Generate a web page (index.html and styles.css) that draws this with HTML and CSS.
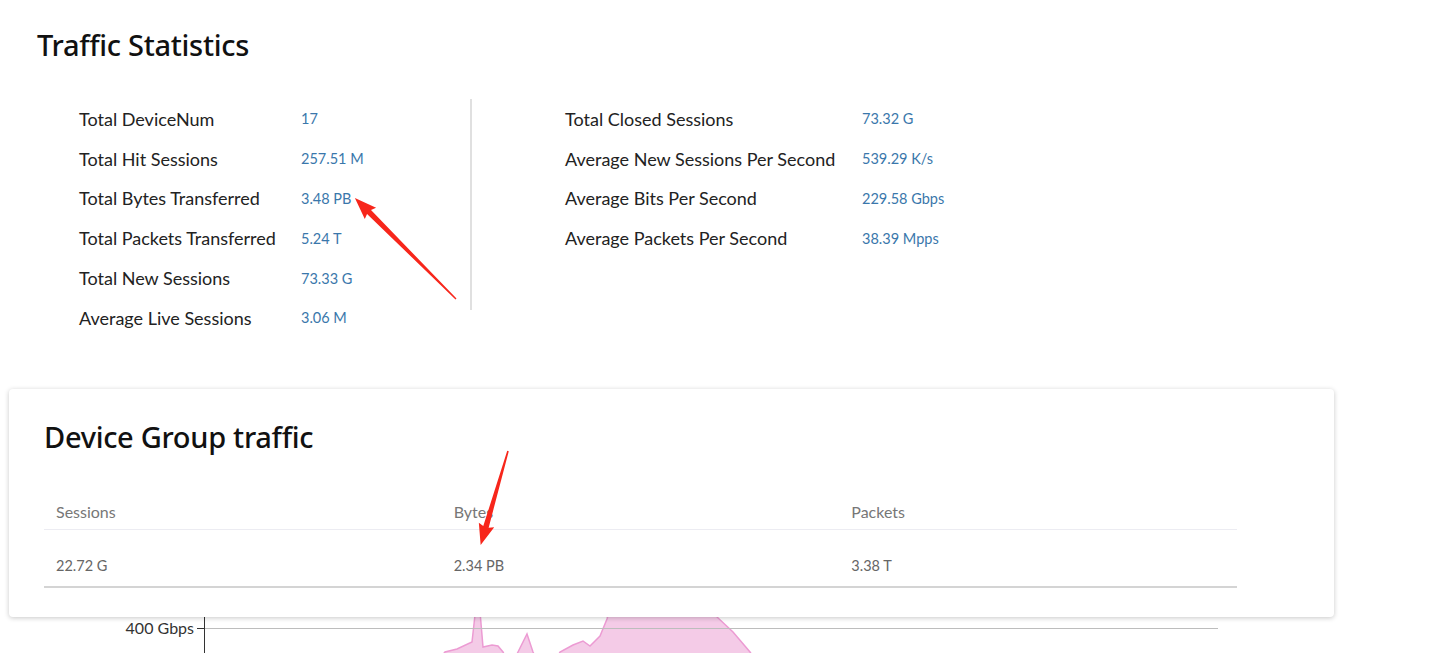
FILE: index.html
```html
<!DOCTYPE html>
<html>
<head>
    <meta charset="UTF-8">
    <title>Traffic Statistics</title>
    <link rel="stylesheet" href="styles.css">
</head>
<body>
    <div class="page">
        <h1 class="page-title">Traffic Statistics</h1>

        <!-- totals -->
        <div class="stats">
            <div class="stats-col stats-left">
                <div class="stat-row"><span class="stat-label">Total DeviceNum</span><span class="stat-value">17</span></div>
                <div class="stat-row"><span class="stat-label">Total Hit Sessions</span><span class="stat-value">257.51 M</span></div>
                <div class="stat-row"><span class="stat-label">Total Bytes Transferred</span><span class="stat-value">3.48 PB</span></div>
                <div class="stat-row"><span class="stat-label">Total Packets Transferred</span><span class="stat-value">5.24 T</span></div>
                <div class="stat-row"><span class="stat-label">Total New Sessions</span><span class="stat-value">73.33 G</span></div>
                <div class="stat-row"><span class="stat-label">Average Live Sessions</span><span class="stat-value">3.06 M</span></div>
            </div>
            <div class="stats-divider"></div>
            <div class="stats-col stats-right">
                <div class="stat-row"><span class="stat-label">Total Closed Sessions</span><span class="stat-value">73.32 G</span></div>
                <div class="stat-row"><span class="stat-label">Average New Sessions Per Second</span><span class="stat-value">539.29 K/s</span></div>
                <div class="stat-row"><span class="stat-label">Average Bits Per Second</span><span class="stat-value">229.58 Gbps</span></div>
                <div class="stat-row"><span class="stat-label">Average Packets Per Second</span><span class="stat-value">38.39 Mpps</span></div>
            </div>
        </div>

        <!-- device group card -->
        <section class="card">
            <h2 class="card-title">Device Group traffic</h2>
            <table class="group-table">
                <thead>
                    <tr><th>Sessions</th><th>Bytes</th><th>Packets</th></tr>
                </thead>
                <tbody>
                    <tr><td>22.72 G</td><td>2.34 PB</td><td>3.38 T</td></tr>
                </tbody>
            </table>
        </section>

        <!-- chart (partly under the card) -->
        <div class="chart">
            <svg width="1437" height="120" viewBox="0 0 1437 120">
                <path class="chart-area" d="M440 90 L445 84 L457 81 L472 74 L478 20 L483 79 L492 77 L498 78 L503 84 L506 90 L515 90 L518 84 L527 66 L533 84 L536 90 L557 90 L560 84 L573 77 L583 73 L590 78 L600 68 L607 51 L615 20 L625 0 L710 0 L717 49 L733 64 L750 84 L754 90 Z"/>
                <line class="chart-grid" x1="204" y1="60.5" x2="1218" y2="60.5"/>
                <line class="chart-axis" x1="204.5" y1="40" x2="204.5" y2="120"/>
                <line class="chart-axis" x1="197" y1="60.5" x2="204" y2="60.5"/>
                <text class="chart-label" x="194" y="66" text-anchor="end">400 Gbps</text>
            </svg>
        </div>

        <!-- red annotation arrows -->
        <svg class="annotations" width="1437" height="653" viewBox="0 0 1437 653">
            <path class="arrow" transform="translate(456 299) rotate(-135)" d="M0 -0.7 L123 -2.8 L121 -8 L143 0 L121 8 L123 2.8 L0 0.7 Z"/>
            <path class="arrow" transform="translate(508 451) rotate(106.2)" d="M0 -0.8 L79 -2.8 L77 -8 L98 0 L77 8 L79 2.8 L0 0.8 Z"/>
        </svg>
    </div>
</body>
</html>
```

FILE: styles.css
```css
* {
    margin: 0;
    padding: 0;
    box-sizing: border-box;
}

body {
    font-family: Lato, "Noto Sans", sans-serif;
    background: #fff;
    color: #222;
    width: 1437px;
    height: 653px;
    overflow: hidden;
}

.page {
    position: relative;
    padding-top: 27px;
}

.page-title {
    font-family: "Noto Sans", Lato, sans-serif;
    font-size: 29px;
    font-weight: 500;
    color: #111;
    line-height: 36px;
    margin-left: 37px;
    letter-spacing: -0.3px;
}

/* totals */
.stats {
    display: flex;
    margin-top: 36px;
    margin-left: 79px;
    height: 290px;
}

.stats-col {
    display: flex;
    flex-direction: column;
}

.stats-left {
    width: 391px;
}

.stats-right {
    padding-left: 93px;
}

.stats-divider {
    width: 2px;
    height: 211px;
    background: #e0e0e0;
}

.stat-row {
    display: flex;
    align-items: center;
    height: 39.8px;
}

.stat-label {
    font-size: 18px;
    color: #222;
}

.stats-left .stat-label {
    width: 222px;
}

.stats-right .stat-label {
    width: 297px;
}

.stat-value {
    font-size: 14.5px;
    color: #3a77ab;
}

/* device group card */
.card {
    position: relative;
    z-index: 1;
    margin-left: 9px;
    width: 1325px;
    height: 228px;
    background: #fff;
    border-radius: 4px;
    box-shadow: 0 1px 5px rgba(0, 0, 0, 0.22);
    padding: 30px 97px 0 35px;
}

.card-title {
    font-family: "Noto Sans", Lato, sans-serif;
    font-size: 29px;
    font-weight: 500;
    color: #111;
    line-height: 36px;
    letter-spacing: -0.3px;
}

.group-table {
    width: 100%;
    margin-top: 40px;
    border-collapse: collapse;
    table-layout: fixed;
}

.group-table th,
.group-table td {
    text-align: left;
    font-weight: 400;
    vertical-align: top;
    line-height: 18px;
    padding-left: 12px;
}

.group-table th {
    font-size: 16px;
    color: #777;
    height: 34px;
    padding-top: 8px;
    border-bottom: 1px solid #ececf2;
}

.group-table td {
    font-size: 14.5px;
    color: #666;
    height: 58px;
    padding-top: 27px;
    border-bottom: 2px solid #d4d4d4;
}

/* chart */
.chart {
    margin-top: -49px;
}

.chart svg {
    display: block;
}

.chart-area {
    fill: #f4cbe7;
    stroke: #ec9bd3;
    stroke-width: 1.5;
}

.chart-grid {
    stroke: #bdbdbd;
    stroke-width: 1;
}

.chart-axis {
    stroke: #333;
    stroke-width: 1;
}

.chart-label {
    font-family: Lato, sans-serif;
    font-size: 16px;
    fill: #333;
}

/* annotations */
.annotations {
    position: absolute;
    top: 0;
    left: 0;
    z-index: 2;
    pointer-events: none;
}

.arrow {
    fill: #f7261b;
}
```
